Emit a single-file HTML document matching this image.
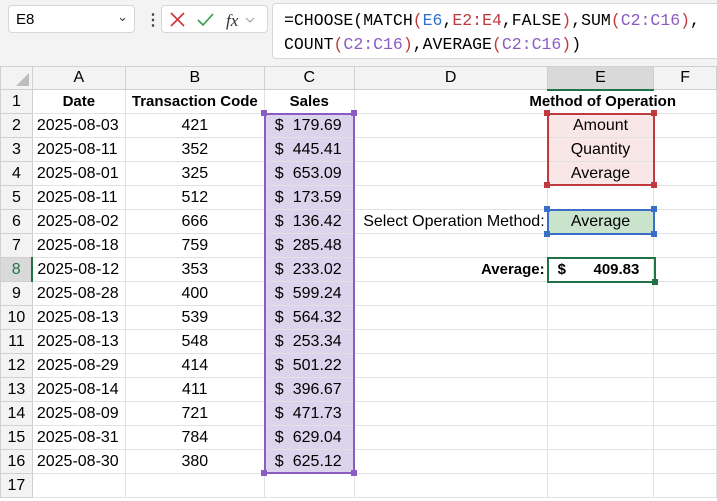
<!DOCTYPE html>
<html><head><style>
*{margin:0;padding:0;box-sizing:border-box}
body{width:717px;height:501px;overflow:hidden;background:#fff;font-family:"Liberation Sans",Arial,sans-serif;position:relative}
.top{position:absolute;left:0;top:0;width:717px;height:66px;background:#f3f3f3}
.nb{position:absolute;left:8px;top:5px;width:127px;height:28px;background:#fff;border:1px solid #d6d6d6;border-radius:4px;font-size:15px;padding:5px 0 0 7px}
.fb{position:absolute;left:161px;top:5px;width:107px;height:28px;background:#fff;border:1px solid #d6d6d6;border-radius:4px}
.fx{position:absolute;left:272px;top:3px;width:450px;height:56px;background:#fff;border:1px solid #d6d6d6;border-radius:4px;font-family:"Liberation Mono",monospace;font-size:16.5px;line-height:24px;padding:5px 0 0 11px;letter-spacing:0}
table{position:absolute;left:0;top:66px;border-collapse:collapse;table-layout:fixed;font-size:16px}
td{border:1px solid #e1e1e1;height:24px;padding:0 4px;white-space:nowrap;overflow:hidden}
tr.h td{height:23px;background:#f3f3f3;text-align:center;border-color:#d0d0d0}
td.r{background:#f3f3f3;text-align:center;border-color:#d0d0d0;padding:0}
.c{text-align:center}.b{font-weight:bold;font-size:15px}.rt{text-align:right}
.m{display:flex;justify-content:space-between;padding:0 8px 0 6px}
.box{position:absolute;border:2px solid}
.hd{position:absolute;width:6px;height:6px}
.r2 {color:#c0393f}.bl{color:#2e6fd0}.pu{color:#8a5cc2}
</style></head><body>
<div class="top"></div>
<div class="nb">E8<span style="position:absolute;right:6px;top:3px;font-size:13px;color:#444">&#8964;</span></div>
<div style="position:absolute;left:145px;top:10px;font-size:16px;font-weight:bold;color:#444">&#8942;</div>
<div class="fb">
<svg width="107" height="28" style="position:absolute;left:0;top:0"><path d="M9 7l13 13M22 7L9 20" stroke="#d13438" stroke-width="1.6" fill="none"/><path d="M36 14l5 5 10-11" stroke="#2f9e44" stroke-width="1.6" fill="none"/><text x="64" y="20" font-family="Liberation Serif" font-style="italic" font-size="17" fill="#333">fx</text><path d="M84 12l4 4 4-4" stroke="#999" fill="none"/></svg>
</div>
<div class="fx">=CHOOSE(MATCH<span class="r2">(</span><span class="bl">E6</span>,<span class="r2">E2:E4</span>,FALSE<span class="r2">)</span>,SUM<span class="r2">(</span><span class="pu">C2:C16</span><span class="r2">)</span>,<br>COUNT<span class="r2">(</span><span class="pu">C2:C16</span><span class="r2">)</span>,AVERAGE<span class="r2">(</span><span class="pu">C2:C16</span><span class="r2">)</span>)</div>
<table>
<colgroup><col style="width:32px"><col style="width:93px"><col style="width:139px"><col style="width:90px"><col style="width:193px"><col style="width:107px"><col style="width:63px"></colgroup>
<tr class="h"><td style="position:relative"><div style="position:absolute;right:3px;bottom:3px;width:0;height:0;border-left:13px solid transparent;border-bottom:13px solid #bdbdbd"></div></td><td>A</td><td>B</td><td>C</td><td>D</td><td style="background:#d9d9d9;border-bottom:2px solid #217346">E</td><td>F</td></tr>
<tr><td class="r">1</td><td class="c b">Date</td><td class="c b">Transaction Code</td><td class="c b">Sales</td><td colspan="3" class="b" style="text-align:right;padding-right:40px;border-right:1px solid #e1e1e1">Method of Operation</td></tr>
<tr><td class="r">2</td><td>2025-08-03</td><td class="c">421</td><td style="background:#dcd3ec"><div class="m"><span>$</span><span>179.69</span></div></td><td></td><td class="c" style="background:#f9e7e7">Amount</td><td></td></tr>
<tr><td class="r">3</td><td>2025-08-11</td><td class="c">352</td><td style="background:#dcd3ec"><div class="m"><span>$</span><span>445.41</span></div></td><td></td><td class="c" style="background:#f9e7e7">Quantity</td><td></td></tr>
<tr><td class="r">4</td><td>2025-08-01</td><td class="c">325</td><td style="background:#dcd3ec"><div class="m"><span>$</span><span>653.09</span></div></td><td></td><td class="c" style="background:#f9e7e7">Average</td><td></td></tr>
<tr><td class="r">5</td><td>2025-08-11</td><td class="c">512</td><td style="background:#dcd3ec"><div class="m"><span>$</span><span>173.59</span></div></td><td></td><td></td><td></td></tr>
<tr><td class="r">6</td><td>2025-08-02</td><td class="c">666</td><td style="background:#dcd3ec"><div class="m"><span>$</span><span>136.42</span></div></td><td class="rt" style="padding-right:2px">Select Operation Method:</td><td class="c" style="background:#c9e3cd">Average</td><td></td></tr>
<tr><td class="r">7</td><td>2025-08-18</td><td class="c">759</td><td style="background:#dcd3ec"><div class="m"><span>$</span><span>285.48</span></div></td><td></td><td></td><td></td></tr>
<tr><td class="r" style="background:#d9d9d9;color:#217346;border-right:2px solid #217346">8</td><td>2025-08-12</td><td class="c">353</td><td style="background:#dcd3ec"><div class="m"><span>$</span><span>233.02</span></div></td><td class="rt b" style="padding-right:2px">Average:</td><td class="b"><div class="m" style="padding:0 10px 0 6px"><span>$</span><span>409.83</span></div></td><td></td></tr>
<tr><td class="r">9</td><td>2025-08-28</td><td class="c">400</td><td style="background:#dcd3ec"><div class="m"><span>$</span><span>599.24</span></div></td><td></td><td></td><td></td></tr>
<tr><td class="r">10</td><td>2025-08-13</td><td class="c">539</td><td style="background:#dcd3ec"><div class="m"><span>$</span><span>564.32</span></div></td><td></td><td></td><td></td></tr>
<tr><td class="r">11</td><td>2025-08-13</td><td class="c">548</td><td style="background:#dcd3ec"><div class="m"><span>$</span><span>253.34</span></div></td><td></td><td></td><td></td></tr>
<tr><td class="r">12</td><td>2025-08-29</td><td class="c">414</td><td style="background:#dcd3ec"><div class="m"><span>$</span><span>501.22</span></div></td><td></td><td></td><td></td></tr>
<tr><td class="r">13</td><td>2025-08-14</td><td class="c">411</td><td style="background:#dcd3ec"><div class="m"><span>$</span><span>396.67</span></div></td><td></td><td></td><td></td></tr>
<tr><td class="r">14</td><td>2025-08-09</td><td class="c">721</td><td style="background:#dcd3ec"><div class="m"><span>$</span><span>471.73</span></div></td><td></td><td></td><td></td></tr>
<tr><td class="r">15</td><td>2025-08-31</td><td class="c">784</td><td style="background:#dcd3ec"><div class="m"><span>$</span><span>629.04</span></div></td><td></td><td></td><td></td></tr>
<tr><td class="r">16</td><td>2025-08-30</td><td class="c">380</td><td style="background:#dcd3ec"><div class="m"><span>$</span><span>625.12</span></div></td><td></td><td></td><td></td></tr>
<tr><td class="r">17</td><td></td><td></td><td></td><td></td><td></td><td></td></tr>
</table>
<div class="box" style="left:264px;top:113px;width:91px;height:361px;border-color:#8a5cc2"></div>
<div class="hd" style="left:261px;top:110px;background:#8a5cc2"></div><div class="hd" style="left:351px;top:110px;background:#8a5cc2"></div><div class="hd" style="left:261px;top:470px;background:#8a5cc2"></div><div class="hd" style="left:351px;top:470px;background:#8a5cc2"></div>
<div class="box" style="left:547px;top:113px;width:108px;height:73px;border-color:#c0393f"></div>
<div class="hd" style="left:544px;top:110px;background:#c0393f"></div><div class="hd" style="left:651px;top:110px;background:#c0393f"></div><div class="hd" style="left:544px;top:182px;background:#c0393f"></div><div class="hd" style="left:651px;top:182px;background:#c0393f"></div>
<div class="box" style="left:547px;top:209px;width:108px;height:26px;border-color:#3a6fc8"></div>
<div class="hd" style="left:544px;top:206px;background:#3a6fc8"></div><div class="hd" style="left:651px;top:206px;background:#3a6fc8"></div><div class="hd" style="left:544px;top:231px;background:#3a6fc8"></div><div class="hd" style="left:651px;top:231px;background:#3a6fc8"></div>
<div class="box" style="left:547px;top:257px;width:109px;height:26px;border-color:#217346"></div>
<div class="hd" style="left:652px;top:279px;background:#217346"></div>
</body></html>
